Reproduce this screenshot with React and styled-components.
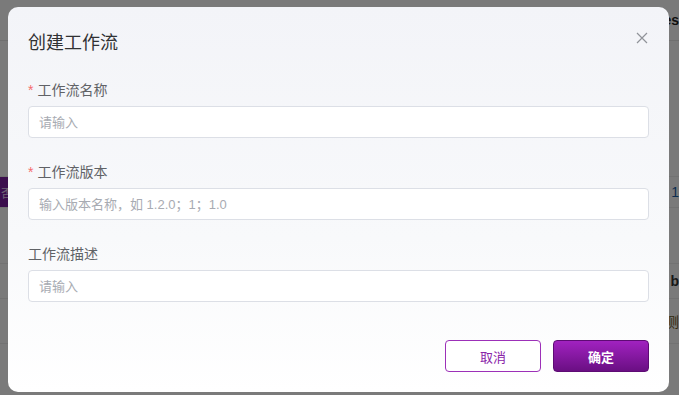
import React from 'react'
import styled, { createGlobalStyle } from 'styled-components'

const GlobalStyle = createGlobalStyle`
  html, body {
    margin: 0;
    padding: 0;
    width: 679px;
    height: 395px;
    overflow: hidden;
    font-family: "Liberation Sans", "Noto Sans CJK SC", sans-serif;
  }
`

const Page = styled.div`
  width: 679px;
  height: 395px;
  background: #fff;
  display: flex;
  flex-direction: column;
`

const PageHeader = styled.div`
  height: 40px;
  border-bottom: 1px solid #e8e8e8;
  display: flex;
  align-items: center;
  justify-content: flex-end;
  font-weight: 700;
  font-size: 14px;
  color: #222;
`

const PageRow = styled.div`
  height: ${props => props.h}px;
  border-bottom: 1px solid #eee;
  display: flex;
  align-items: center;
  justify-content: space-between;
  font-size: 14px;
  color: ${props => props.color || '#333'};
  font-weight: ${props => (props.bold ? 700 : 400)};
`

const PurpleTag = styled.span`
  align-self: stretch;
  background: #7b1fa2;
  color: #e8d0f0;
  font-size: 12px;
  display: flex;
  align-items: center;
  padding: 0 6px 0 1px;
`

const Mask = styled.div`
  position: fixed;
  inset: 0;
  background: rgba(0, 0, 0, 0.52);
`

const Dialog = styled.div`
  position: fixed;
  left: 8px;
  top: 7px;
  width: 661px;
  height: 385px;
  box-sizing: border-box;
  border-radius: 10px;
  background: linear-gradient(180deg, #f3f4f8 0%, #f8f9fb 60%, #ffffff 100%);
  padding: 24px 20px 20px;
  display: flex;
  flex-direction: column;
`

const Header = styled.div`
  display: flex;
  justify-content: space-between;
  align-items: center;
  height: 24px;
`

const Title = styled.span`
  font-size: 18px;
  line-height: 24px;
  color: #303133;
`

const CloseBtn = styled.button`
  border: none;
  background: none;
  padding: 0;
  margin-right: 1px;
  margin-top: -10px;
  width: 12px;
  height: 12px;
  display: flex;
  align-items: center;
  justify-content: center;
  cursor: pointer;
`

const Body = styled.div`
  padding-top: 19px;
  display: flex;
  flex-direction: column;
`

const FormItem = styled.div`
  margin-bottom: 18px;
  display: flex;
  flex-direction: column;
`

const Label = styled.label`
  height: 32px;
  line-height: 32px;
  font-size: 14px;
  color: #606266;
  display: flex;
  align-items: center;
`

const Star = styled.span`
  color: #f56c6c;
  margin-right: 4px;
  font-size: 14px;
`

const Input = styled.input`
  box-sizing: border-box;
  height: 32px;
  width: 100%;
  border: 1px solid #dcdfe6;
  border-radius: 4px;
  background: #fff;
  padding: 0 10px;
  font-family: inherit;
  font-size: 13px;
  outline: none;
  &::placeholder {
    color: #a8abb2;
  }
`

const Footer = styled.div`
  margin-top: auto;
  display: flex;
  justify-content: flex-end;
  gap: 12px;
`

const Button = styled.button`
  box-sizing: border-box;
  width: 96px;
  height: 32px;
  border-radius: 4px;
  font-family: inherit;
  font-size: 13px;
  cursor: pointer;
  border: 1px solid ${props => (props.primary ? '#5e0b74' : '#9c30b8')};
  background: ${props =>
    props.primary ? 'linear-gradient(180deg, #a122c0 0%, #6a0f83 100%)' : '#fff'};
  color: ${props => (props.primary ? '#fff' : '#8a24a8')};
  font-weight: ${props => (props.primary ? 700 : 400)};
`

const fields = [
  { label: '工作流名称', required: true, placeholder: '请输入' },
  { label: '工作流版本', required: true, placeholder: '输入版本名称，如 1.2.0；1；1.0' },
  { label: '工作流描述', required: false, placeholder: '请输入' },
]

const App = () => (
  <>
    <GlobalStyle />
    <Page>
      <PageHeader>es</PageHeader>
      <PageRow h={135} />
      <PageRow h={30} color="#1a5fa8">
        <PurpleTag>否</PurpleTag>
        <span>: 1</span>
      </PageRow>
      <PageRow h={55} />
      <PageRow h={34} bold>
        <span />
        <span>b</span>
      </PageRow>
      <PageRow h={44} color="#6b5a20">
        <span />
        <span>t测</span>
      </PageRow>
    </Page>
    <Mask />
    <Dialog>
      <Header>
        <Title>创建工作流</Title>
        <CloseBtn aria-label="close">
          <svg width="12" height="12" viewBox="0 0 12 12">
            <path d="M1 1L11 11M11 1L1 11" stroke="#909399" strokeWidth="1.2" fill="none" />
          </svg>
        </CloseBtn>
      </Header>
      <Body>
        {fields.map(f => (
          <FormItem key={f.label}>
            <Label>
              {f.required && <Star>*</Star>}
              {f.label}
            </Label>
            <Input placeholder={f.placeholder} />
          </FormItem>
        ))}
      </Body>
      <Footer>
        <Button>取消</Button>
        <Button primary>确定</Button>
      </Footer>
    </Dialog>
  </>
)

export default App
